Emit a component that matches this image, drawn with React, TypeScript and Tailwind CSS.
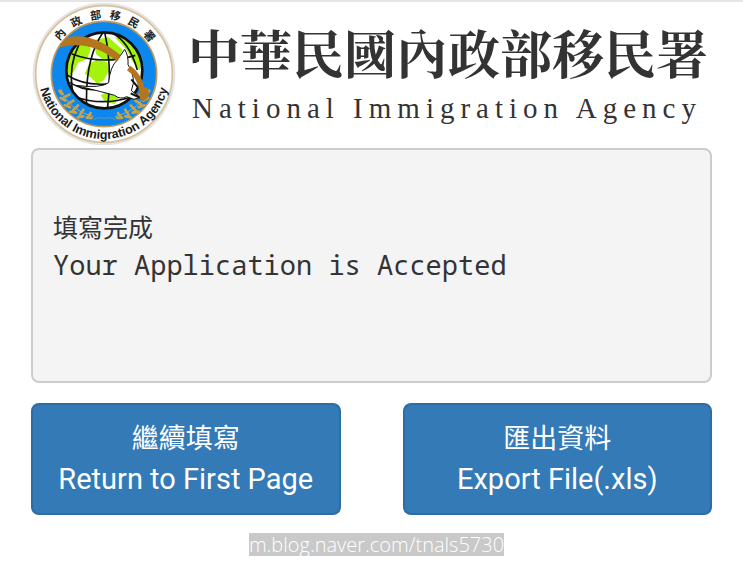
const SEAL_CHARS = [
  { char: "內", angle: -48 },
  { char: "政", angle: -28 },
  { char: "部", angle: -8 },
  { char: "移", angle: 11 },
  { char: "民", angle: 30 },
  { char: "署", angle: 50 },
];

function Sprig() {
  return (
    <g fill="none" stroke="#c9a24a" strokeWidth="5" strokeLinecap="round">
      <path d="M107 268 Q128 330 204 350" strokeWidth="3" />
      <path d="M110 282 l-8 -10 M116 292 l16 -8 M120 302 l-14 -8 M128 312 l16 -10 M134 322 l-16 -6 M144 330 l14 -14 M152 338 l-17 -3 M164 344 l10 -15 M174 349 l-16 3 M188 351 l8 -12 M198 354 l-14 -1" strokeWidth="8" />
    </g>
  );
}

function Seal() {
  return (
    <svg viewBox="20 6 432 432" className="size-36 shrink-0" role="img" aria-label="National Immigration Agency seal">
      <defs>
        <path id="seal-lower" d="M44 264 A197 197 0 0 0 428 264" />
        <clipPath id="seal-globe">
          <circle cx="237" cy="211" r="114" />
        </clipPath>
      </defs>
      <circle cx="236" cy="222" r="214" fill="#e6e4e2" />
      <circle cx="236" cy="222" r="205" fill="#fff" stroke="#d8c09a" strokeWidth="5" />
      <circle cx="236" cy="222" r="158" fill="#0c87ee" stroke="#c49a57" strokeWidth="5" />

      <Sprig />
      <g transform="translate(474 0) scale(-1 1)">
        <Sprig />
      </g>
      <path d="M206 358 Q222 348 236 356 Q252 348 270 358" fill="none" stroke="#4b8fc0" strokeWidth="4" />

      <g clipPath="url(#seal-globe)">
        <circle cx="237" cy="211" r="114" fill="#fff" />
        <path d="M120 150 L160 110 L190 118 L196 150 L184 178 L158 188 L146 214 L128 230 L116 190Z" fill="#a4f30c" />
        <path d="M206 120 L250 112 L292 150 L280 178 L258 176 L236 182 L212 162Z" fill="#a4f30c" />
        <path d="M192 190 L214 180 L246 186 L250 214 L236 240 L216 252 L196 232 L178 222Z" fill="#a4f30c" />
        <path d="M268 112 L310 120 L346 176 L344 212 L322 186 L304 150Z" fill="#a4f30c" />
        <path d="M226 286 L246 276 L280 292 L268 312 L240 306Z" fill="#a4f30c" />
        <g fill="none" stroke="#111" strokeWidth="5">
          <path d="M237 92 Q178 170 184 322" />
          <path d="M176 108 Q118 196 148 300" />
          <path d="M237 92 Q262 200 246 330" />
          <path d="M256 96 Q312 124 336 210" />
          <path d="M140 162 Q230 196 330 166" />
          <path d="M120 222 Q180 262 262 250" />
          <path d="M134 248 Q190 282 240 262" strokeWidth="4" />
          <path d="M150 290 Q230 320 320 290" />
        </g>
      </g>
      <circle cx="237" cy="211" r="114" fill="none" stroke="#111" strokeWidth="8" />

      <path
        d="M298 148 Q310 168 308 194 Q326 222 324 250 L318 272 L344 292 L326 298 L304 290 Q284 300 268 286 Q240 278 150 256 Q226 266 250 248 Q254 200 276 180Z"
        fill="#fff"
        stroke="#111"
        strokeWidth="3"
      />
      <path d="M318 238 L336 260 M316 280 L346 294" fill="none" stroke="#111" strokeWidth="6" />
      <path d="M104 134 L126 112 Q200 94 286 166 L276 184 Q194 118 106 142Z" fill="#b3761f" />
      <path d="M310 204 Q352 234 352 298" fill="none" stroke="#b3761f" strokeWidth="17" />
      <path d="M344 272 Q364 250 370 274 Q374 296 350 306" fill="#b3761f" />

      <g fill="#222" fontSize="33" fontWeight="700" textAnchor="middle" fontFamily="'Noto Sans CJK TC', sans-serif">
        {SEAL_CHARS.map(({ char, angle }) => (
          <text key={char} x="236" y="56" transform={`rotate(${angle} 236 222)`}>
            {char}
          </text>
        ))}
      </g>
      <text fill="#1c1c1c" fontSize="38" fontWeight="700" textAnchor="middle" fontFamily="'Liberation Sans', sans-serif">
        <textPath href="#seal-lower" startOffset="50%">
          National Immigration Agency
        </textPath>
      </text>
    </svg>
  );
}

function ActionButton({ label, english }: { label: string; english: string }) {
  return (
    <button
      type="button"
      className="h-28 flex-1 rounded-lg border-2 border-[#2e6da4] bg-[#337ab7] text-[29px] leading-10 text-white"
    >
      <span className="block text-[27px]">{label}</span>
      <span className="block">{english}</span>
    </button>
  );
}

export default function App() {
  return (
    <div className="border-t-2 border-[#e5e5e5] bg-white font-[Roboto,'Noto_Sans_CJK_TC',sans-serif]">
      <header className="flex px-8">
        <Seal />
        <h1 className="ml-3 flex flex-col pt-4 whitespace-nowrap text-[#333]">
          <span className="font-['Noto_Serif_CJK_TC','Noto_Sans_CJK_TC',serif] text-[52px] leading-[68px] font-bold">
            中華民國內政部移民署
          </span>
          <span className="pl-1 font-['Liberation_Serif',serif] text-[29px] leading-[44px] tracking-[6px]">
            National Immigration Agency
          </span>
        </h1>
      </header>

      <main className="mt-0.5 px-[31px]">
        <section className="h-[235px] rounded-lg border-2 border-[#ccc] bg-[#f4f4f4] px-5 pt-[58px] font-['Noto_Sans_Mono','DejaVu_Sans_Mono','Noto_Sans_CJK_TC',monospace] leading-[38px] text-[#333]">
          <p className="text-[25px]">填寫完成</p>
          <p className="text-[27px]">Your Application is Accepted</p>
        </section>
        <div className="mt-5 flex gap-[62px]">
          <ActionButton label="繼續填寫" english="Return to First Page" />
          <ActionButton label="匯出資料" english="Export File(.xls)" />
        </div>
      </main>

      <footer className="mt-[18px] flex justify-center pl-[10px]">
        <span className="bg-[#c9c9c9] font-['Open_Sans',sans-serif] text-[20px] leading-[23px] font-light text-white">
          m.blog.naver.com/tnals5730
        </span>
      </footer>
    </div>
  );
}
